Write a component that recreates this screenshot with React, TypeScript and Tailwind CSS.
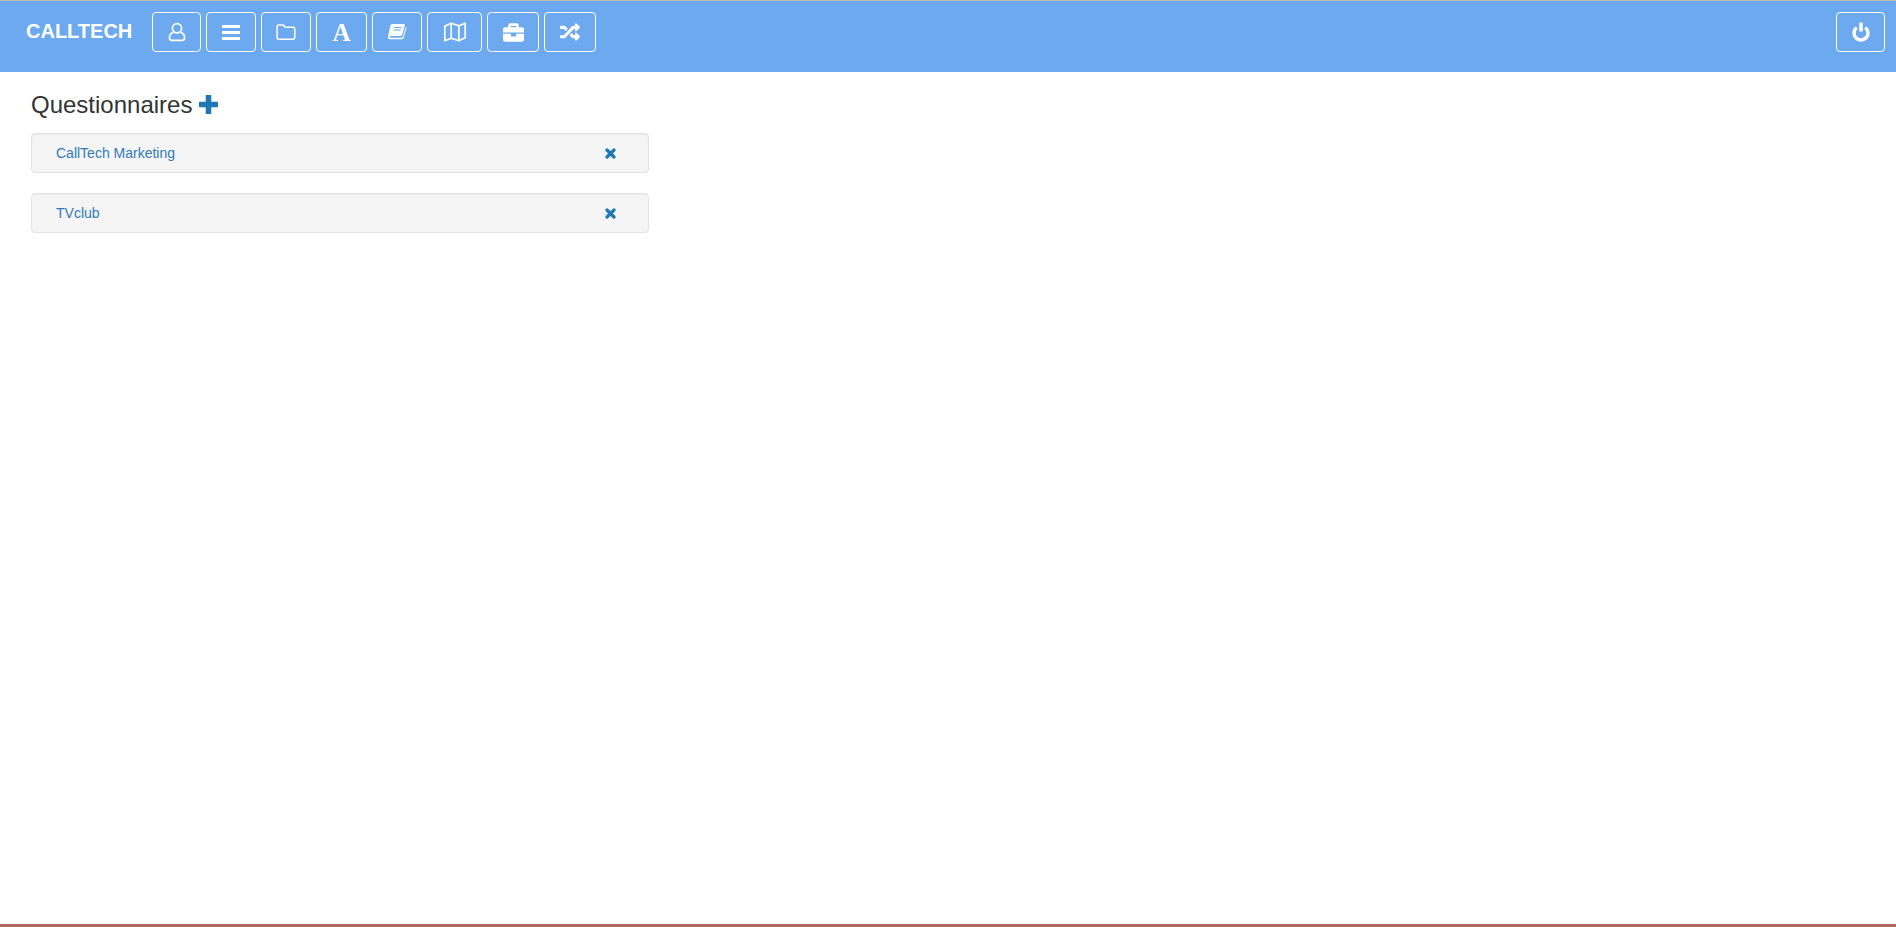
import type { ReactNode } from "react";
import { FaBriefcase, FaRandom } from "react-icons/fa";

function UserIcon() {
  return (
    <svg viewBox="0 0 18 20" className="w-[18px] h-[20px]" fill="none" stroke="white" strokeWidth="1.700">
      <circle cx="9" cy="6.300" r="4.600" />
      <path d="M5.400 10.200C3.200 11 1.500 12.800 1.500 15.300v.7c0 1.500 1 2.400 2.400 2.400h10.200c1.400 0 2.400-.9 2.400-2.400v-.7c0-2.500-1.700-4.300-3.900-5.100" />
    </svg>
  );
}

function BarsIcon() {
  return (
    <div className="w-[18px] flex flex-col gap-[3px]">
      <div className="h-[3px] bg-white" />
      <div className="h-[3px] bg-white" />
      <div className="h-[3px] bg-white" />
    </div>
  );
}

function FolderIcon() {
  return (
    <svg viewBox="0 0 20 16" className="w-[20px] h-[16px]" fill="none" stroke="white" strokeWidth="1.500">
      <path d="M2.800 1h3.900c.7 0 1.200.3 1.500.9l.4.8c.2.4.5.6 1 .6h7.500c1 0 1.700.7 1.700 1.700v8.500c0 1-.7 1.700-1.700 1.700H2.800c-1 0-1.700-.7-1.700-1.700V2.700C1.100 1.700 1.800 1 2.800 1z" />
    </svg>
  );
}

function BookIcon() {
  return (
    <svg viewBox="0 0 20 18" className="w-[20px] h-[18px]" fill="white">
      <path d="M5.500 1h11.200c.9 0 1.300.6 1.100 1.400l-2.600 9.200c-.3.9-.9 1.400-1.900 1.400H3.600c-.9 0-1.400.8-.9 1.300.3.300.7.400 1.200.400h10.600c.6 0 1-.3 1.200-.8l3-9.700.9.500-3 10.200c-.3.800-1 1.300-1.900 1.300H3.400C1.700 16.700.6 15.200 1 13.500L3.400 2.800C3.700 1.700 4.400 1 5.500 1z" />
      <path d="M7 4.500h7.500M6.300 7h7.500" stroke="#6ca9ef" strokeWidth="1.100" />
    </svg>
  );
}

function MapIcon() {
  return (
    <svg viewBox="0 0 24 20" className="w-[24px] h-[20px]" fill="none" stroke="white" strokeWidth="1.700" strokeLinejoin="round">
      <path d="M1.800 4.200 8.200 1.200 15.800 3.700 22.200 1.200V15.800L15.800 18.800 8.200 16.300 1.800 18.800Z" />
      <path d="M8.200 1.200V16.300M15.800 3.700V18.800" />
    </svg>
  );
}

function PowerIcon() {
  return (
    <svg viewBox="0 0 18 20" className="w-[18px] h-[20px]" fill="none" stroke="white" strokeWidth="3.400">
      <path d="M4.700 5.500a7 7 0 1 0 8.600 0" />
      <path d="M9 .5v9" />
    </svg>
  );
}

function PlusIcon() {
  return (
    <svg viewBox="0 0 19 19" className="w-[19px] h-[19px]" fill="#1f78b4">
      <path d="M6.700 .5c0-.3.200-.5.500-.5h4.600c.3 0 .5.200.5.500v6.300h6.200c.3 0 .5.200.5.500v4.400c0 .3-.2.500-.5.500h-6.200v6.300c0 .3-.2.500-.5.500H7.200c-.3 0-.5-.2-.5-.5v-6.300H.5c-.3 0-.5-.2-.5-.5V7.300c0-.3.200-.5.500-.5h6.200z" />
    </svg>
  );
}

function CloseIcon() {
  return (
    <svg viewBox="0 0 11 11" className="w-[11px] h-[11px]" fill="none" stroke="#1f78b4" strokeWidth="3.200" strokeLinecap="round">
      <path d="M2 2l7 7M9 2l-7 7" />
    </svg>
  );
}

function NavButton({ width, children }: { width: string; children: ReactNode }) {
  return (
    <button className={`h-[40px] ${width} flex items-center justify-center border border-white rounded-[4px] text-white`}>
      {children}
    </button>
  );
}

const questionnaires = ["CallTech Marketing", "TVclub"];

export default function App() {
  return (
    <div className="h-[927px] flex flex-col bg-white font-['Liberation_Sans',Arial,sans-serif] text-[#333]">
      <header className="h-[72px] shrink-0 border-t border-[#bdbdbd] bg-[#6ca9ef] pt-[11px] pl-[26px] pr-[11px] flex items-start">
        <div className="w-[126px] h-[40px] flex items-center pb-[2px] text-[20px] font-bold text-white">CALLTECH</div>
        <nav className="flex gap-[5px]">
          <NavButton width="w-[49px]"><UserIcon /></NavButton>
          <NavButton width="w-[50px]"><BarsIcon /></NavButton>
          <NavButton width="w-[50px]"><FolderIcon /></NavButton>
          <NavButton width="w-[51px]">
            <span className="font-['Liberation_Serif',serif] font-bold text-[25px] leading-none">A</span>
          </NavButton>
          <NavButton width="w-[50px]"><BookIcon /></NavButton>
          <NavButton width="w-[55px]"><MapIcon /></NavButton>
          <NavButton width="w-[52px]"><FaBriefcase className="text-[21px]" /></NavButton>
          <NavButton width="w-[52px]"><FaRandom className="text-[20px]" /></NavButton>
        </nav>
        <div className="ml-auto">
          <NavButton width="w-[49px]"><PowerIcon /></NavButton>
        </div>
      </header>
      <main className="flex-1 pl-[31px] pt-[16px]">
        <h2 className="h-[33px] flex items-center gap-[7px] text-[24px] leading-[33px]">
          Questionnaires
          <PlusIcon />
        </h2>
        <div className="mt-[12px] w-[618px] flex flex-col gap-[20px]">
          {questionnaires.map((name) => (
            <div
              key={name}
              className="h-[40px] flex items-center justify-between pl-[24px] pr-[32px] bg-[#f5f5f5] border border-[#e3e3e3] rounded-[4px] shadow-[inset_0_1px_1px_rgba(0,0,0,0.05)] text-[14px] text-[#337ab7]"
            >
              <a>{name}</a>
              <CloseIcon />
            </div>
          ))}
        </div>
      </main>
      <footer className="h-[3px] shrink-0 bg-[#b4685c]" />
    </div>
  );
}
